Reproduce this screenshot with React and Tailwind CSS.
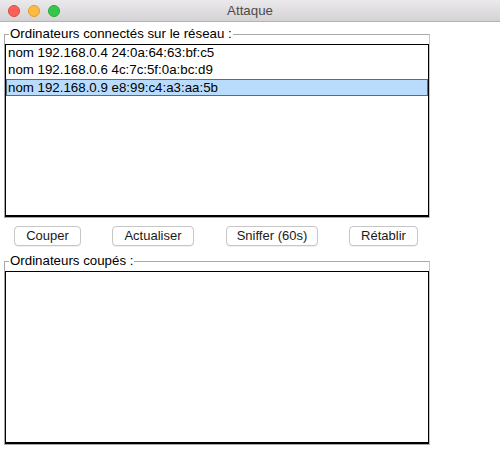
import React from "react";

const rows = [
  "nom 192.168.0.4 24:0a:64:63:bf:c5",
  "nom 192.168.0.6 4c:7c:5f:0a:bc:d9",
  "nom 192.168.0.9 e8:99:c4:a3:aa:5b",
];

function Btn({ children, w, ml }) {
  return (
    <button
      className={`h-[20px] rounded-[4px] border border-[#c6c6c6] bg-white text-[13px] leading-[18px] text-[#1a1a1a] shadow-[0_1px_0_rgba(0,0,0,0.06)] ${w} ${ml}`}
    >
      {children}
    </button>
  );
}

export default function App() {
  return (
    <div
      className="w-[500px] h-[452px] bg-white overflow-hidden text-black"
      style={{ fontFamily: '"Liberation Sans", Arial, sans-serif' }}
    >
      {/* title bar */}
      <div className="relative h-[22px] bg-gradient-to-b from-[#ebe9eb] to-[#d4d2d4] border-b border-[#b3b3b3] flex items-center">
        <div className="flex items-center gap-[8px] pl-[8px]">
          <span className="w-[12px] h-[12px] rounded-full bg-[#fc605b] border border-[#de4841]" />
          <span className="w-[12px] h-[12px] rounded-full bg-[#fdbc40] border border-[#dd9e2e]" />
          <span className="w-[12px] h-[12px] rounded-full bg-[#34c84a] border border-[#24a936]" />
        </div>
        <div className="absolute inset-0 flex items-center justify-center text-[13.3px] text-[#4b4b4b]">
          Attaque
        </div>
      </div>

      <div className="pl-[4px]">
        <fieldset className="mt-[4px] w-[426px] border border-[#a8a8a8] border-r-[#c4c4c4] pt-[2px] px-0 pb-0 m-0">
          <legend className="ml-[4px] px-[1px] text-[13.3px] leading-[16px]">
            Ordinateurs connectés sur le réseau :
          </legend>
          <div className="h-[173px] border border-black border-b-2">
            {rows.map((r, i) =>
              i === 2 ? (
                <div
                  key={i}
                  className="h-[17px] bg-[#b9dcfd] border border-[#5a6c82] pl-[1px] text-[13.3px] leading-[15px] whitespace-nowrap"
                >
                  {r}
                </div>
              ) : (
                <div
                  key={i}
                  className="h-[17px] pl-[2px] text-[13.3px] leading-[16px] whitespace-nowrap"
                >
                  {r}
                </div>
              )
            )}
          </div>
        </fieldset>

        <div className="flex mt-[8px]">
          <Btn w="w-[67px]" ml="ml-[10px]">Couper</Btn>
          <Btn w="w-[82px]" ml="ml-[31px]">Actualiser</Btn>
          <Btn w="w-[92px]" ml="ml-[32px]">Sniffer (60s)</Btn>
          <Btn w="w-[69px]" ml="ml-[31px]">Rétablir</Btn>
        </div>

        <fieldset className="mt-[7px] w-[426px] border border-[#a8a8a8] border-r-[#c4c4c4] pt-[2px] px-0 pb-0 m-0">
          <legend className="ml-[4px] px-[1px] text-[13.3px] leading-[16px]">
            Ordinateurs coupés :
          </legend>
          <div className="h-[173px] border border-black border-b-2" />
        </fieldset>
      </div>
    </div>
  );
}
